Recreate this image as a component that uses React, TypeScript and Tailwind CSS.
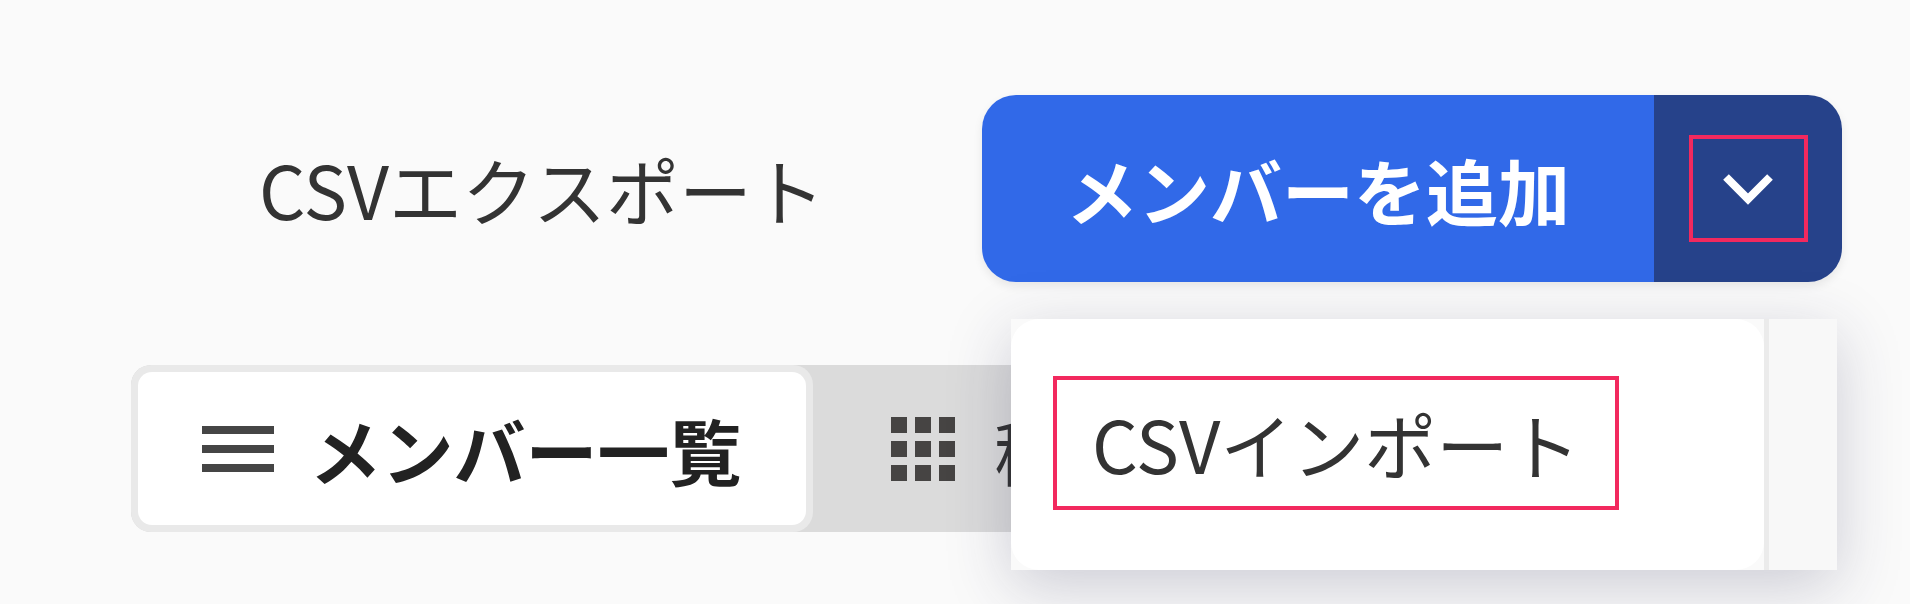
import React from "react";

// Header actions + view tabs, with the "add member" split-button menu open
const jp = "font-['Noto_Sans_CJK_JP','Noto_Sans',sans-serif]";

function Chevron() {
  return (
    <svg width="54" height="34" viewBox="0 0 54 34" fill="none">
      <polyline points="5,5 27,27 49,5" stroke="#ffffff" strokeWidth="8" strokeLinecap="butt" strokeLinejoin="miter" />
    </svg>
  );
}

function ListIcon() {
  return (
    <span className="flex w-[72px] flex-col gap-[11px]">
      <span className="h-[8px] w-full bg-[#454545]" />
      <span className="h-[8px] w-full bg-[#454545]" />
      <span className="h-[8px] w-full bg-[#454545]" />
    </span>
  );
}

function GridIcon() {
  return (
    <span className="grid shrink-0 grid-cols-3 gap-[8px]">
      {Array.from({ length: 9 }).map((_, i) => (
        <span key={i} className="h-[16px] w-[16px] bg-[#464443]" />
      ))}
    </span>
  );
}

export default function App() {
  return (
    <main className={`relative h-[604px] w-full overflow-hidden bg-[#fafafa] ${jp}`}>
      {/* top actions */}
      <div className="flex items-center pl-[259px] pt-[95px]">
        <button className="w-[723px] whitespace-nowrap text-left text-[73px] leading-none text-[#333333]">CSVエクスポート</button>
        <div className="flex h-[187px] overflow-hidden rounded-[34px] shadow-[0_4px_10px_rgba(0,0,0,0.08)]">
          <button className="flex w-[672px] items-center justify-center whitespace-nowrap bg-[#3169e8] text-[72px] font-bold leading-none text-white">
            メンバーを追加
          </button>
          <button className="flex w-[188px] items-center justify-center bg-[#26428a]">
            <span className="flex h-[107px] w-[119px] items-center justify-center border-[4px] border-[#f2295e]">
              <Chevron />
            </span>
          </button>
        </div>
      </div>

      {/* view tabs */}
      <div className="ml-[131px] mt-[83px] flex h-[167px] w-[880px] overflow-hidden rounded-l-[20px] bg-[#dbdbdb]">
        <div className="shrink-0 rounded-[20px] bg-[#e9e9e9] p-[7px]">
          <div className="flex h-full w-[668px] items-center justify-center gap-[35px] rounded-[14px] bg-white">
            <ListIcon />
            <span className="whitespace-nowrap text-[72px] font-bold leading-none text-[#222222]">メンバー一覧</span>
          </div>
        </div>
        <div className="flex items-center gap-[39px] pl-[78px]">
          <GridIcon />
          <span className="whitespace-nowrap text-[72px] leading-none text-[#333333]">稼働状況</span>
        </div>
      </div>

      {/* dropdown menu */}
      <div className="absolute left-[1011px] top-[319px] flex h-[251px] shadow-[0_16px_60px_rgba(40,40,80,0.22)]">
        <div className="w-[753px] rounded-[28px] bg-white pl-[42px] pt-[57px]">
          <div className="flex h-[134px] w-[566px] items-center border-[4px] border-[#f2295e] pl-[35px]">
            <span className="whitespace-nowrap text-[72px] leading-none text-[#333333]">CSVインポート</span>
          </div>
        </div>
        <div className="w-[73px] border-l-[5px] border-[#ebebeb] bg-[#f8f8f8]" />
      </div>
    </main>
  );
}
